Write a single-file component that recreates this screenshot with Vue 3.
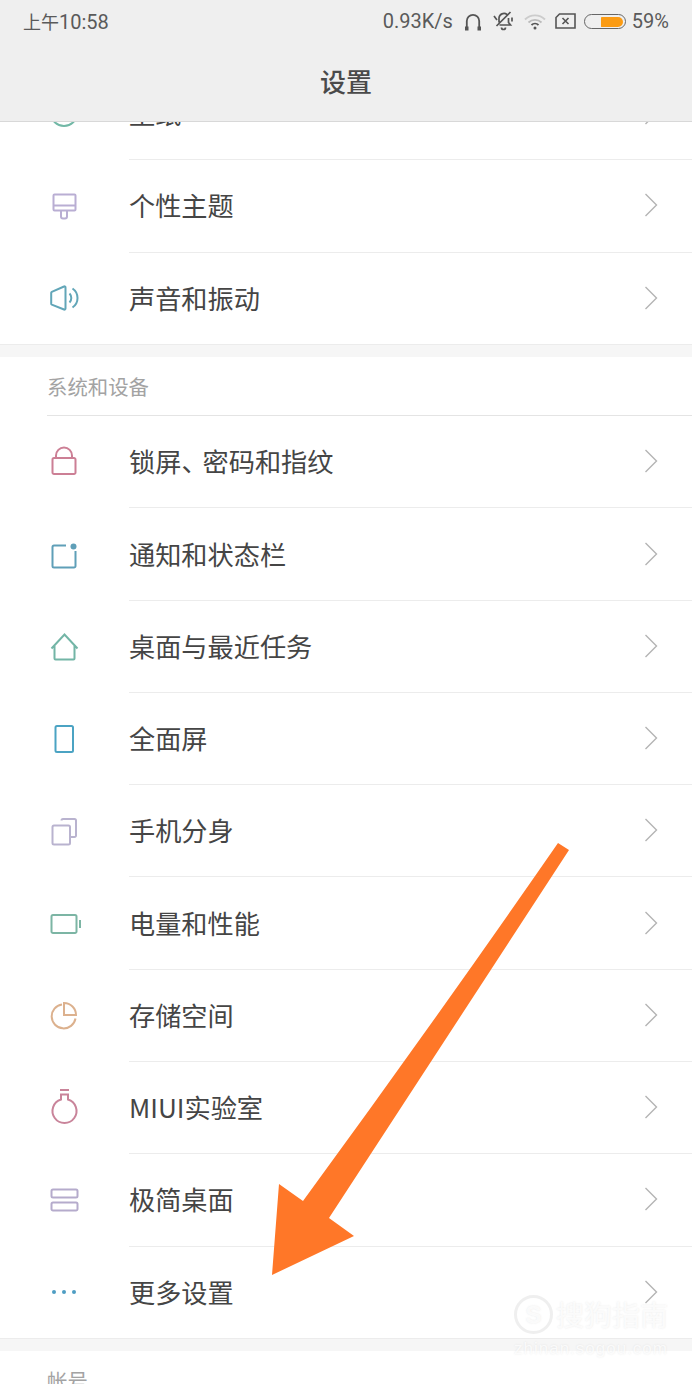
<script setup>
const group1 = [
  { label: '壁纸', color: '#72b8a6', d: 'M5 18a13 13 0 1 0 26 0a13 13 0 1 0-26 0' },
  { label: '个性主题', color: '#b9aed3', d: 'M7.500 8.500a1 1 0 0 1 1-1h20a1 1 0 0 1 1 1v14a1 1 0 0 1-1 1h-20a1 1 0 0 1-1-1zM7.500 18.500h22M15 23.500v6a2 2 0 0 0 2 2h2a2 2 0 0 0 2-2v-6' },
  { label: '声音和振动', color: '#62a6b8', d: 'M5.800 11.800l12.200-5.300a1 1 0 0 1 1.500 1v21a1 1 0 0 1-1.500 1L5.800 24.700a1 1 0 0 1-.600-1v-11a1 1 0 0 1 .600-.900zM23.500 13.500a6.500 6.500 0 0 1 0 9M26.500 8.500a11.500 11.500 0 0 1 0 19' },
]
const group2 = [
  { label: '锁屏', mark: true, rest: '密码和指纹', color: '#cc7f95', d: 'M6.500 16.500a1.500 1.500 0 0 1 1.500-1.500h20a1.500 1.500 0 0 1 1.500 1.500v13a1.500 1.500 0 0 1-1.500 1.500h-20a1.500 1.500 0 0 1-1.500-1.500zM10 15v-2.500a8 8 0 0 1 16 0v2.500' },
  { label: '通知和状态栏', color: '#5f9fb8', d: 'M20 9.500h-12a1.500 1.500 0 0 0-1.500 1.500v19a1.500 1.500 0 0 0 1.500 1.500h20a1.500 1.500 0 0 0 1.500-1.500v-15', dot: [27.500, 10.500, 3] },
  { label: '桌面与最近任务', color: '#73b5a6', d: 'M5.500 20.500L18.500 6.500l13 14M8.500 18v12.500a1 1 0 0 0 1 1h18a1 1 0 0 0 1-1v-12.500' },
  { label: '全面屏', color: '#4ba3c3', d: 'M9.500 7.500a1.500 1.500 0 0 1 1.500-1.500h14.500a1.500 1.500 0 0 1 1.500 1.500v23a1.500 1.500 0 0 1-1.500 1.500h-14.500a1.500 1.500 0 0 1-1.500-1.500z' },
  { label: '手机分身', color: '#b9b3cf', d: 'M6.500 15a1.500 1.500 0 0 1 1.500-1.500h14.500a1.500 1.500 0 0 1 1.500 1.500v16a1.500 1.500 0 0 1-1.500 1.500h-14.500a1.500 1.500 0 0 1-1.500-1.500zM15.500 8.500a1.500 1.500 0 0 1 1.500-1.500h11.500a1.500 1.500 0 0 1 1.500 1.500v15a1.500 1.500 0 0 1-1.500 1.500h-4' },
  { label: '电量和性能', color: '#7cb5a4', d: 'M5.500 11.500a1.500 1.500 0 0 1 1.500-1.500h22a1.500 1.500 0 0 1 1.500 1.500v15a1.500 1.500 0 0 1-1.500 1.500h-22a1.500 1.500 0 0 1-1.500-1.500zM34 15v8' },
  { label: '存储空间', color: '#dcb18e', d: 'M16 7.500a12 12 0 1 0 13.500 14M18 6v12h12a12 12 0 0 0-12-12z' },
  { label: 'MIUI实验室', color: '#c9849a', d: 'M15 5.500v5a12 12 0 1 0 7 0v-5zM14 1h9' },
  { label: '极简桌面', color: '#b5abcc', d: 'M5.500 10a1.500 1.500 0 0 1 1.500-1.500h23a1.500 1.500 0 0 1 1.500 1.500v5a1.500 1.500 0 0 1-1.500 1.500h-23a1.500 1.500 0 0 1-1.500-1.500zM5.500 23a1.500 1.500 0 0 1 1.500-1.500h23a1.500 1.500 0 0 1 1.500 1.500v5a1.500 1.500 0 0 1-1.500 1.500h-23a1.500 1.500 0 0 1-1.500-1.500z' },
  { label: '更多设置', color: '#4e9dc3', dots: true },
]
</script>

<template>
  <div class="page">
    <header class="top">
      <div class="status">
        <span class="time"><span class="ampm">上午</span>10:58</span>
        <div class="status-right">
          <span class="speed">0.93K/s</span>
          <svg class="s-icon headset" width="18" height="18" viewBox="0 0 18 18" fill="none" stroke="#555" stroke-width="1.800">
            <path d="M2.800 15V8a6.200 6.200 0 0 1 12.400 0v7" />
            <path d="M1 13.500h3.500V17.500H1zM13.500 13.500h3.500V17.500h-3.500z" fill="#555" stroke="none" />
          </svg>
          <svg class="s-icon bell" width="21" height="20" viewBox="0 0 21 20" fill="none" stroke="#555" stroke-width="1.700">
            <path d="M6 11.500V7a5 5 0 0 1 8-3.500M15.500 7v4.500l2 2.500H6.500M8.500 16.500a2 2 0 0 0 4 0M17.500 1L3.500 15M1 5l3 4M19 6.500v4" />
          </svg>
          <svg class="s-icon wifi" width="22" height="16" viewBox="0 0 22 16" fill="none" stroke-width="1.800">
            <path d="M1 5.500a14 14 0 0 1 20 0" stroke="#ccc" />
            <path d="M4.500 8.500a9.500 9.500 0 0 1 13 0" stroke="#bbb" />
            <path d="M7.500 11a5 5 0 0 1 7 0" stroke="#555" />
            <circle cx="11" cy="14" r="1.500" fill="#555" />
          </svg>
          <svg class="s-icon sim" width="21" height="16" viewBox="0 0 21 16" fill="none" stroke="#555" stroke-width="1.600">
            <path d="M4.500 1h15.500v14H1V4.500zM7.500 5l6 6M13.500 5l-6 6" />
          </svg>
          <div class="battery"><div class="battery-fill"></div></div>
          <span class="pct">59%</span>
        </div>
      </div>
      <h1 class="title">设置</h1>
    </header>

    <main class="scroll">
      <section class="group first">
        <div v-for="row in group1" :key="row.label" class="row">
          <svg class="icon" width="36" height="36" viewBox="0 0 36 36" fill="none" :stroke="row.color" stroke-width="2">
            <path :d="row.d" />
          </svg>
          <div class="row-body">
            <span class="label">{{ row.label }}</span>
            <svg class="chevron" width="14" height="24" viewBox="0 0 14 24" fill="none" stroke="#b4b4b4" stroke-width="1.400">
              <path d="M1.500 1l11 11-11 11" />
            </svg>
          </div>
        </div>
      </section>

      <div class="gap"></div>

      <section class="group">
        <div class="group-title">系统和设备</div>
        <div v-for="row in group2" :key="row.label" class="row">
          <svg class="icon" width="36" height="36" viewBox="0 0 36 36" fill="none" :stroke="row.color" stroke-width="2">
            <path v-if="row.d" :d="row.d" />
            <circle v-if="row.dot" :cx="row.dot[0]" :cy="row.dot[1]" :r="row.dot[2]" :fill="row.color" stroke="none" />
            <g v-if="row.dots" :fill="row.color" stroke="none">
              <circle cx="8" cy="18" r="2" />
              <circle cx="18" cy="18" r="2" />
              <circle cx="28" cy="18" r="2" />
            </g>
          </svg>
          <div class="row-body">
            <span class="label">{{ row.label }}<span v-if="row.mark" class="mark">、</span>{{ row.rest }}</span>
            <svg class="chevron" width="14" height="24" viewBox="0 0 14 24" fill="none" stroke="#b4b4b4" stroke-width="1.400">
              <path d="M1.500 1l11 11-11 11" />
            </svg>
          </div>
        </div>
      </section>

      <div class="gap"></div>

      <section class="group">
        <div class="group-title">帐号</div>
      </section>
    </main>

    <svg class="arrow" width="692" height="1384" viewBox="0 0 692 1384">
      <path fill="#ff7728" d="M558 843L569 850L329 1218L354 1236L272 1275L279 1184L303 1201Q434 1022 558 843Z" />
    </svg>

    <div class="watermark">
      <div class="wm-top">
        <span class="wm-s">S</span>
        <span class="wm-text">搜狗指南</span>
      </div>
      <div class="wm-url">zhinan.sogou.com</div>
    </div>
  </div>
</template>

<style scoped>
.page {
  position: relative;
  width: 692px;
  height: 1384px;
  overflow: hidden;
  background: #fff;
  font-family: "Noto Sans CJK SC", "Noto Sans", sans-serif;
  color: #444;
}
.top {
  height: 122px;
  box-sizing: border-box;
  background: #efefef;
  border-bottom: 1px solid #d8d8d8;
  padding: 0 23px;
}
.status {
  height: 42px;
  display: flex;
  align-items: center;
  justify-content: space-between;
  font-family: Roboto, "Noto Sans CJK SC", sans-serif;
  font-size: 20px;
  color: #5a5a5a;
}
.ampm {
  font-size: 18px;
}
.status-right {
  display: flex;
  align-items: center;
}
.s-icon {
  display: block;
  flex: none;
}
.headset { margin-left: 11px; margin-top: 1px; }
.bell { margin-left: 11px; margin-bottom: 1px; }
.wifi { margin-left: 10px; margin-top: 1px; }
.sim { margin-left: 9px; }
.battery {
  box-sizing: border-box;
  width: 42px;
  height: 15px;
  margin-left: 8px;
  margin-top: 1px;
  padding: 1.500px 2px;
  border: 1.500px solid #666;
  border-radius: 8px;
  display: flex;
  justify-content: flex-end;
}
.battery-fill {
  width: 22px;
  background: #fb9b13;
  border-radius: 1px 6px 6px 1px;
}
.pct { margin-left: 6px; }
.title {
  margin: 0;
  padding-top: 7px;
  text-align: center;
  font-size: 26px;
  line-height: 64px;
  font-weight: 500;
  color: #4a4a4a;
}
.scroll {
  height: 1262px;
  overflow: hidden;
}
.group {
  background: #fff;
}
.first {
  margin-top: -54.400px;
}
.first .row {
  height: 92.500px;
}
.row {
  display: flex;
  height: 92.280px;
  align-items: stretch;
}
.icon {
  flex: none;
  display: block;
  align-self: center;
  margin-left: 46px;
  margin-right: 47px;
  margin-bottom: 2px;
}
.row-body {
  flex: 1;
  min-width: 0;
  box-sizing: border-box;
  display: flex;
  align-items: center;
  justify-content: space-between;
  padding-right: 34px;
  padding-bottom: 1px;
  border-bottom: 1px solid #ececec;
}
.row:last-child .row-body {
  border-bottom: none;
}
.label {
  font-size: 26.200px;
  color: #454545;
}
.mark {
  letter-spacing: -5px;
}
.chevron {
  display: block;
}
.gap {
  height: 12px;
  margin-top: -1px;
  background: #f6f6f6;
  border-top: 1px solid #ececec;
}
.group-title {
  margin-left: 47px;
  height: 59px;
  box-sizing: border-box;
  padding-top: 14px;
  font-size: 20.400px;
  line-height: 30px;
  color: #a3a3a3;
  border-bottom: 1px solid #e4e4e4;
}
.arrow {
  position: absolute;
  left: 0;
  top: 0;
}
.watermark {
  position: absolute;
  left: 514px;
  top: 1295px;
  width: 160px;
  color: rgba(255, 255, 255, 0.8);
  text-shadow: 0 0 2px rgba(120, 120, 120, 0.16);
}
.wm-top {
  display: flex;
  align-items: center;
  gap: 3px;
}
.wm-s {
  box-sizing: border-box;
  width: 39px;
  height: 39px;
  border-radius: 50%;
  border: 3px solid rgba(232, 232, 232, 0.7);
  text-align: center;
  font: 700 24px/33px "Liberation Sans", sans-serif;
}
.wm-text {
  font-size: 28px;
  line-height: 39px;
  white-space: nowrap;
}
.wm-url {
  margin-top: 5px;
  font: 17px/20px "Liberation Sans", sans-serif;
  white-space: nowrap;
  letter-spacing: 1px;
}
</style>

<style>
html, body { margin: 0; background: #fff; }
</style>
